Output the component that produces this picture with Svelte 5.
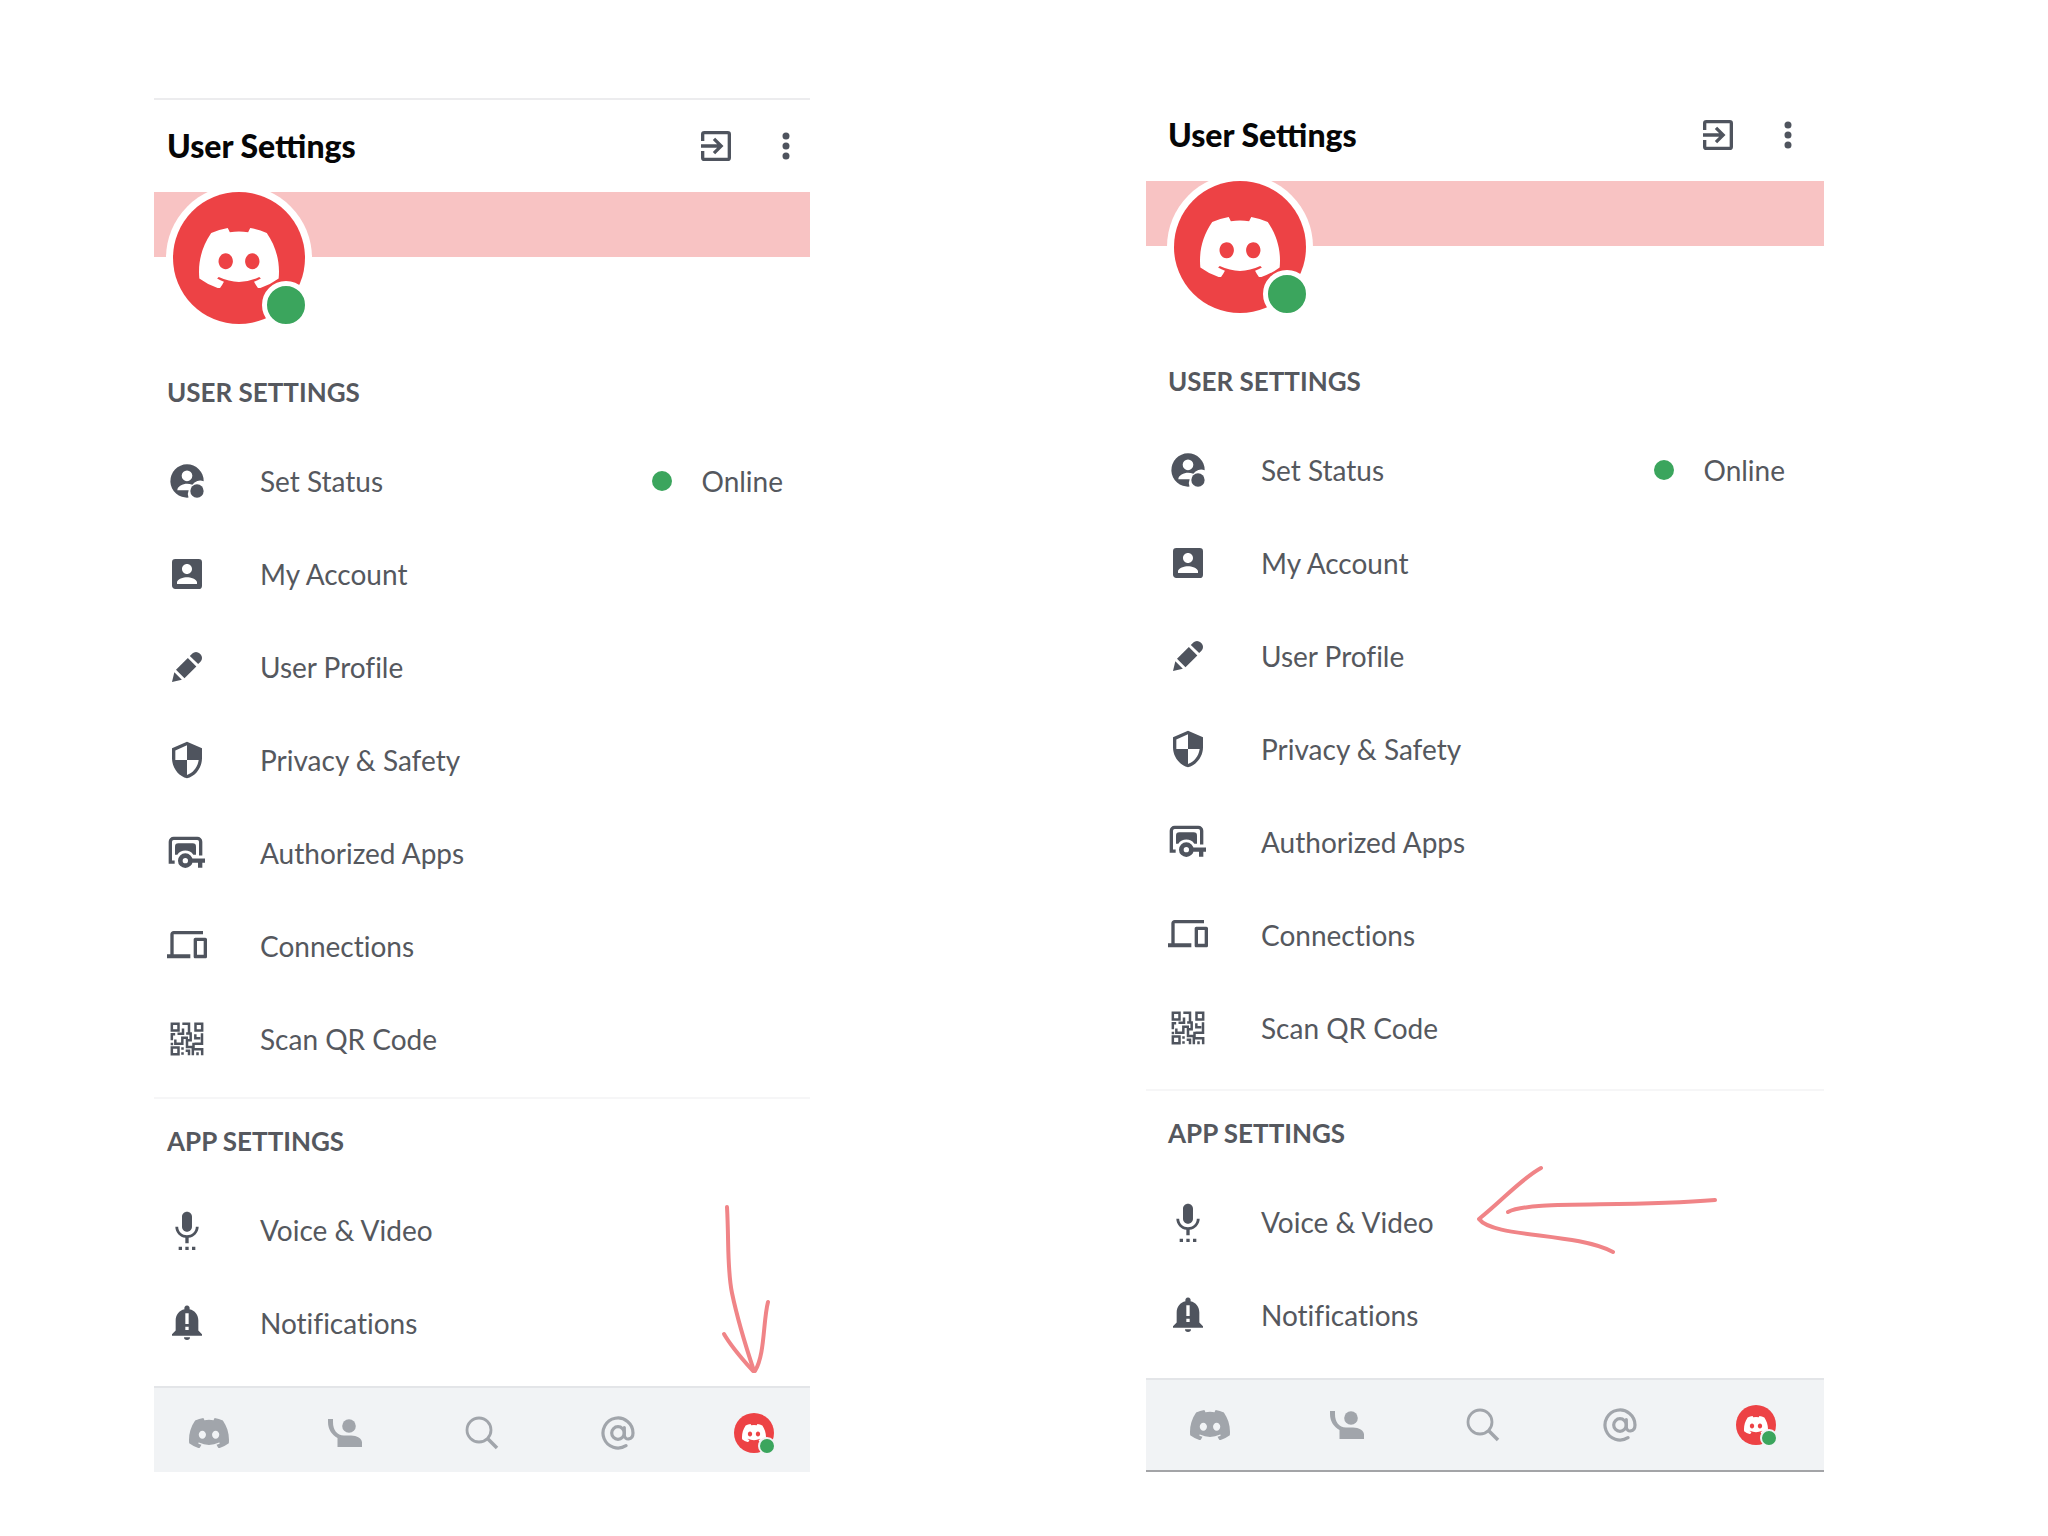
<script lang="ts">
	const userSettings = [
		{ icon: 'status', label: 'Set Status', value: 'Online' },
		{ icon: 'account', label: 'My Account' },
		{ icon: 'pencil', label: 'User Profile' },
		{ icon: 'shield', label: 'Privacy & Safety' },
		{ icon: 'apps', label: 'Authorized Apps' },
		{ icon: 'devices', label: 'Connections' },
		{ icon: 'qr', label: 'Scan QR Code' }
	];

	const appSettings = [
		{ icon: 'voice', label: 'Voice & Video' },
		{ icon: 'bell', label: 'Notifications' }
	];

	const icons: Record<string, string> = {
		account:
			'M3 5v14c0 1.1.89 2 2 2h14a2 2 0 0 0 2-2V5a2 2 0 0 0-2-2H5a2 2 0 0 0-2 2zm12 4c0 1.66-1.34 3-3 3s-3-1.34-3-3 1.34-3 3-3 3 1.34 3 3zm-9 8c0-2 4-3.1 6-3.1s6 1.1 6 3.1v1H6v-1z',
		pencil:
			'M3 21l1.4-5.9 4.5 4.5zM5.4 13.7l7.1-7.1 5.100 5.100-7.100 7.100zM13.700 5.400l1.500-1.500a3.100 3.100 0 0 1 4.400 0l.5.5a3.100 3.100 0 0 1 0 4.400L18.700 10.200z',
		shield:
			'M12 1L3 5v6c0 5.55 3.84 10.74 9 12 5.16-1.26 9-6.45 9-12V5l-9-4zm0 10.99h7c-.53 4.12-3.28 7.79-7 8.94V12H5V6.3l7-3.11v8.8z',
		devices:
			'M4 5h17.6V3H4c-1.1 0-2 .9-2 2v12H0v2.4h14V17H4V5zm19 2h-6c-.55 0-1 .45-1 1v10.4c0 .55.45 1 1 1h6c.55 0 1-.45 1-1V8c0-.55-.45-1-1-1zm-1 10.2h-4V9h4v8.2z',
		voice:
			'M7 24h2v-2H7v2zm4 0h2v-2h-2v2zm4 0h2v-2h-2v2zM12 13c1.66 0 2.99-1.34 2.99-3L15 4c0-1.66-1.34-3-3-3S9 2.34 9 4v6c0 1.66 1.34 3 3 3zm5.3-3c0 3-2.54 5.1-5.3 5.1S6.7 13 6.7 10H5c0 3.41 2.72 6.23 6 6.72V20h2v-3.28c3.28-.48 6-3.3 6-6.72h-1.7z',
		bell: 'M12 1.5a1.6 1.6 0 0 0-1.5 2.2C7.3 4.4 5.2 7 5.2 10.5v6L3 18.7v.9h18v-.9l-2.200-2.200v-6c0-3.500-2.100-6.100-5.300-6.800A1.600 1.600 0 0 0 12 1.500zM11 6.200h2v6.400h-2zM11 14.200h2v2h-2zM10.200 20.600h3.600a1.800 1.600 0 0 1-3.600 0z'
	};

	const logo =
		'M107.7,8.07A105.15,105.15,0,0,0,81.47,0a72.06,72.06,0,0,0-3.36,6.83A97.68,97.68,0,0,0,49,6.83,72.37,72.37,0,0,0,45.64,0,105.89,105.89,0,0,0,19.39,8.09C2.79,32.65-1.71,56.6.54,80.21h0A105.73,105.73,0,0,0,32.71,96.36,77.7,77.7,0,0,0,39.6,85.25a68.42,68.42,0,0,1-10.85-5.18c.91-.66,1.8-1.34,2.66-2a75.57,75.57,0,0,0,64.32,0c.87.71,1.76,1.39,2.66,2a68.68,68.68,0,0,1-10.87,5.19,77,77,0,0,0,6.89,11.1A105.25,105.25,0,0,0,126.6,80.22h0C129.24,52.84,122.09,29.11,107.7,8.07ZM42.45,65.69C36.18,65.69,31,60,31,53s5-12.74,11.43-12.74S54,46,53.89,53,48.84,65.69,42.45,65.69Zm42.24,0C78.41,65.69,73.25,60,73.25,53s5-12.74,11.44-12.74S96.23,46,96.12,53,91.08,65.69,84.69,65.69Z';
</script>

{#snippet mark(cls: string)}
	<svg class={cls} viewBox="0 0 127.14 96.36" aria-hidden="true"><path d={logo} /></svg>
{/snippet}

{#snippet rowIcon(name: string)}
	<svg class="icon" viewBox="0 0 24 24" aria-hidden="true">
		{#if name === 'status'}
			<path
				fill-rule="evenodd"
				d="M12 2a10 10 0 1 0 .9 19.96A5.8 5.8 0 0 1 13 17.500H6.200c0-2.300 3.400-3.900 5.800-3.900 1.100 0 2.200.3 3.200.7A5.600 5.600 0 0 1 22 12.200V12A10 10 0 0 0 12 2zm0 3.700a3.200 3.200 0 1 1 0 6.400 3.200 3.200 0 0 1 0-6.400z"
			/>
			<circle cx="18" cy="18" r="4" />
		{:else if name === 'apps'}
			<path class="line" stroke-width="2" d="M4.600 17.500H2V5.200a2 2 0 0 1 2-2h14.200a2 2 0 0 1 2 2v8.300" />
			<path d="M4.800 13V8.200a2 2 0 0 1 2-2h8.600a2 2 0 0 1 2 2V13h-1.600a5.800 5.800 0 0 0-9.600 0z" />
			<circle class="line" cx="11" cy="16.600" r="3" stroke-width="2.800" />
			<path d="M14.500 15.300h8.300v2.600h-1.600v3h-2.600v-3h-4.100z" />
		{:else if name === 'qr'}
			<g class="line" stroke-width="1.500">
				<path d="M2.900 2.900h4v4h-4zM17.100 2.900h4v4h-4zM2.900 17.100h4v4h-4z" />
				<path
					d="M9.200 2.900h4v5.600M9.600 5.700v3.200H6.300M2.900 12.800V9.200h2M5 12.300v2.500h4.200v-3.500h3.400M11.500 8.700h2.700v4.100H12v4h3.900v-2.600M17 9.200v2.300h3M21 8.500v6.300h-4.500M9.300 17v1.400M9.300 20v1.500M11.200 19h2v2.700M15.500 21.700v-3.500h5.600v3.500M18.300 20v1.700M2.200 15h1.500"
				/>
			</g>
		{:else}
			<path fill-rule="evenodd" d={icons[name]} />
		{/if}
	</svg>
{/snippet}

{#snippet settingList(items: { icon: string; label: string; value?: string }[])}
	<ul>
		{#each items as item}
			<li>
				<button class="row">
					{@render rowIcon(item.icon)}
					<span class="label">{item.label}</span>
					{#if item.value}
						<span class="value"><i class="online"></i>{item.value}</span>
					{/if}
				</button>
			</li>
		{/each}
	</ul>
{/snippet}

{#snippet screen()}
	<header>
		<h1>User Settings</h1>
		<button aria-label="Log out">
			<svg class="icon" viewBox="0 0 24 24" aria-hidden="true">
				<path
					d="M10.090 15.590L11.500 17l5-5-5-5-1.410 1.410L12.670 11H3v2h9.670zM19 3H5a2 2 0 0 0-2 2v4h2V5h14v14H5v-4H3v4a2 2 0 0 0 2 2h14a2 2 0 0 0 2-2V5a2 2 0 0 0-2-2z"
				/>
			</svg>
		</button>
		<button aria-label="More options">
			<svg class="icon" viewBox="0 0 24 24" aria-hidden="true">
				<circle cx="12" cy="6" r="2.100" />
				<circle cx="12" cy="12" r="2.100" />
				<circle cx="12" cy="18" r="2.100" />
			</svg>
		</button>
	</header>
	<div class="banner">
		<div class="avatar">
			{@render mark('face')}
			<i class="badge"></i>
		</div>
	</div>
	<section class="user">
		<h2>USER SETTINGS</h2>
		{@render settingList(userSettings)}
	</section>
	<section class="app">
		<h2>APP SETTINGS</h2>
		{@render settingList(appSettings)}
	</section>
	<nav>
		<button aria-label="Home">{@render mark('home')}</button>
		<button aria-label="Friends">
			<svg width="34" height="28" viewBox="0 0 34 28" aria-hidden="true">
				<path d="M0 0h5v3c0 8 4 13.500 11 13.500h7c6 0 11 3 11 7V28H9.500v-9C4 16 0 10.500 0 3z" />
				<circle cx="21" cy="7" r="6.800" />
			</svg>
		</button>
		<button aria-label="Search">
			<svg class="line" width="34" height="34" viewBox="0 0 34 34" aria-hidden="true">
				<circle cx="14" cy="14" r="12" stroke-width="2.800" />
				<path d="M22.500 22.500l9.500 9.500" stroke-width="3.600" />
			</svg>
		</button>
		<button aria-label="Mentions">
			<svg class="line" width="34" height="34" viewBox="0 0 34 34" aria-hidden="true">
				<g stroke-width="3.200" stroke-linecap="round">
					<circle cx="17" cy="17" r="6.300" />
					<path d="M23.300 11.500v7.500c0 5.600 8.700 5.600 8.700-2a15 15 0 1 0-7 12.700" />
				</g>
			</svg>
		</button>
		<button aria-label="Profile">
			<span class="avatar small">
				{@render mark('face')}
				<i class="badge"></i>
			</span>
		</button>
	</nav>
{/snippet}

<main>
	<article class="first">
		{@render screen()}
		<svg class="arrow down" width="56" height="176" viewBox="0 0 56 176" aria-hidden="true">
			<path d="M7 4C9 40 7 66 12 90S26 144 34 168" />
			<path d="M4 131C12 145 24 158 33 168" />
			<path d="M48 99C43 118 45 152 35 168" />
		</svg>
	</article>
	<article class="second">
		{@render screen()}
		<svg class="arrow left" width="250" height="96" viewBox="0 0 250 96" aria-hidden="true">
			<path d="M70 6C50 17 34 36 8 57C22 76 104 70 142 90" />
			<path d="M37 50C60 38 150 46 244 38" />
		</svg>
	</article>
</main>

<style>
	:global(body) {
		margin: 0;
		background: #fff;
	}

	main {
		display: grid;
		grid-template-columns: 656fr 678fr;
		column-gap: 336px;
		align-items: start;
		padding: 87px 224px 62px 154px;
		font-family: Lato, sans-serif;
		color: #55585e;
	}

	article {
		--inset: 13px;
		--inset-end: 0px;
		--tail: 12px;
		position: relative;
		border-top: 2px solid transparent;
	}

	.first {
		margin-top: 11px;
		border-top-color: #ececee;
	}

	.second {
		--inset: 22px;
		--inset-end: 12px;
		--tail: 15px;
		border-bottom: 2px solid #a3a4a7;
	}

	button {
		display: flex;
		align-items: center;
		justify-content: center;
		margin: 0;
		padding: 0;
		border: 0;
		background: none;
		font: inherit;
		color: inherit;
	}

	header {
		display: flex;
		align-items: center;
		gap: 30px;
		height: 92px;
		padding-left: var(--inset);
		padding-right: calc(var(--inset-end) + 4px);
	}

	h1 {
		flex: 1;
		margin: 0;
		font-size: 32px;
		line-height: 40px;
		font-weight: 900;
		color: #060607;
	}

	.icon {
		display: block;
		width: 40px;
		height: 40px;
		fill: #4f545e;
	}

	.line {
		fill: none;
		stroke: #4f545e;
	}

	.banner {
		height: 65px;
		padding-left: var(--inset);
		margin-bottom: 93px;
		background: #f8c3c3;
		clip-path: inset(0 0 -94px 0);
	}

	.avatar {
		position: relative;
		display: flex;
		align-items: center;
		justify-content: center;
		width: 132px;
		height: 132px;
		margin-left: 6px;
		border-radius: 50%;
		background: #ed4245;
		box-shadow: 0 0 0 7px #fff;
	}

	.face {
		width: 80px;
		fill: #fff;
	}

	.badge {
		position: absolute;
		right: -5px;
		bottom: -5px;
		width: 38px;
		height: 38px;
		border: 5px solid #fff;
		border-radius: 50%;
		background: #3ba55d;
	}

	.small {
		width: 40px;
		height: 40px;
		margin: 0;
		box-shadow: none;
	}

	.small .face {
		width: 24px;
	}

	.small .badge {
		right: -2px;
		bottom: -2px;
		width: 14px;
		height: 14px;
		border: 2px solid #f1f3f5;
	}

	section {
		padding-left: var(--inset);
		padding-right: var(--inset-end);
	}

	.user {
		padding-bottom: var(--tail);
		border-bottom: 2px solid #f6f6f7;
	}

	.app {
		padding-bottom: 17px;
	}

	h2 {
		margin: 0;
		font-size: 26px;
		line-height: 84px;
		font-weight: 700;
	}

	ul {
		margin: 0;
		padding: 0;
		list-style: none;
	}

	.row {
		width: 100%;
		height: 93px;
		justify-content: flex-start;
		font-size: 28px;
		line-height: 36px;
		font-variant-ligatures: none;
	}

	.label {
		flex: 1;
		margin-left: 53px;
		text-align: left;
	}

	.value {
		display: flex;
		align-items: center;
		gap: 30px;
		margin-right: 27px;
	}

	.online {
		width: 20px;
		height: 20px;
		border-radius: 50%;
		background: #3ba55d;
	}

	nav {
		display: flex;
		align-items: center;
		justify-content: space-between;
		height: 78px;
		padding-top: 6px;
		padding-left: calc(var(--inset) + 18px);
		padding-right: calc(var(--inset-end) + 32px);
		border-top: 2px solid #e3e5e8;
		background: #f1f3f5;
	}

	.second nav {
		height: 90px;
		padding-top: 0;
	}

	nav button {
		width: 48px;
		height: 48px;
	}

	nav svg {
		fill: #a1a5ab;
	}

	nav .line {
		fill: none;
		stroke: #a1a5ab;
	}

	.home {
		width: 40px;
	}

	nav .face {
		fill: #fff;
	}

	/* hand-drawn pointers over the screens */
	.arrow {
		position: absolute;
		fill: none;
		stroke: #f08487;
		stroke-width: 4;
		stroke-linecap: round;
		stroke-linejoin: round;
	}

	.down {
		right: 34px;
		bottom: 93px;
	}

	.left {
		left: 325px;
		bottom: 212px;
	}
</style>
